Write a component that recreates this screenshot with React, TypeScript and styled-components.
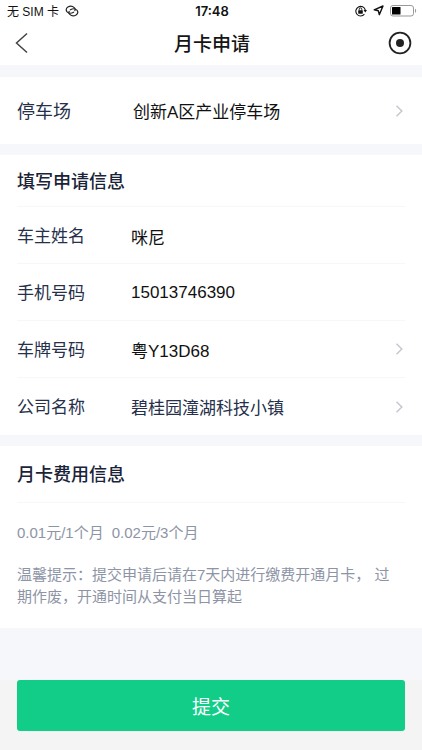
import React from "react";
import styled, { createGlobalStyle } from "styled-components";

const GlobalStyle = createGlobalStyle`
  * { box-sizing: border-box; }
  html, body, #root { height: 100%; }
  body {
    margin: 0;
    background: #f4f4f4;
    color: #1a2338;
    font-family: "Liberation Sans", "Noto Sans CJK SC", sans-serif;
  }
  button, input { font: inherit; }
`;

const Screen = styled.div`
  display: flex;
  flex-direction: column;
  min-height: 100%;
`;

const StatusBar = styled.div`
  display: grid;
  grid-template-columns: 1fr auto 1fr;
  align-items: center;
  height: 21px;
  padding: 0 5px 0 7px;
  background: #fff;
  color: #111;
  font-size: 12px;
`;

const StatusGroup = styled.div<{ $end?: boolean }>`
  display: flex;
  align-items: center;
  justify-content: ${(p) => (p.$end ? "flex-end" : "flex-start")};
  gap: 6px;
`;

const Clock = styled.time`
  font: 600 13px "Inter", sans-serif;
`;

const NavBar = styled.header`
  display: grid;
  grid-template-columns: 1fr auto 1fr;
  align-items: center;
  height: 44px;
  padding: 0 10px 0 12px;
  background: #fff;
`;

const NavTitle = styled.h1`
  margin: 0;
  padding-bottom: 2px;
  color: #151515;
  font-size: 19px;
  font-weight: 500;
`;

const IconButton = styled.button<{ $end?: boolean }>`
  display: flex;
  justify-self: ${(p) => (p.$end ? "end" : "start")};
  padding: 0;
  border: 0;
  background: none;
  cursor: pointer;
`;

const Content = styled.main`
  display: flex;
  flex-direction: column;
  gap: 11px;
  padding: 12px 0 52px;
  background: #f5f7fa;
`;

const Card = styled.section`
  padding: 0 17px;
  background: #fff;
`;

const CardTitle = styled.h2<{ $tall?: boolean }>`
  display: flex;
  align-items: center;
  height: ${(p) => (p.$tall ? 57 : 52)}px;
  margin: 0;
  padding-bottom: 2px;
  border-bottom: 1px solid #f7f7f8;
  color: #1a2338;
  font-size: 18px;
  font-weight: 500;
`;

const Row = styled.div<{ $tall?: boolean }>`
  display: grid;
  grid-template-columns: ${(p) => (p.$tall ? 116 : 114)}px 1fr;
  align-items: center;
  height: ${(p) => (p.$tall ? 67 : 57)}px;
  border-bottom: 1px solid #f7f7f8;
  &:last-child { border-bottom: 0; }
`;

const Label = styled.label<{ $large?: boolean }>`
  padding-bottom: 2px;
  color: #26304a;
  font-size: ${(p) => (p.$large ? 18 : 17)}px;
`;

const TextInput = styled.input`
  width: 100%;
  height: 28px;
  padding: 2px 0 0;
  border: 0;
  outline: 0;
  background: none;
  color: #111;
  font-size: 17px;
`;

const Picker = styled.button<{ $muted?: boolean }>`
  display: flex;
  align-items: center;
  justify-content: space-between;
  padding: 0;
  border: 0;
  background: none;
  color: ${(p) => (p.$muted ? "#26304a" : "#111")};
  font-size: 17px;
  text-align: left;
  cursor: pointer;
`;

const Fees = styled.p`
  display: flex;
  gap: 8px;
  margin: 0;
  padding-top: 19px;
  color: #8d94a5;
  font-size: 15px;
  line-height: 22px;
`;

const Tip = styled.p`
  margin: 0;
  padding: 20px 8px 20px 0;
  color: #8d94a5;
  font-size: 15px;
  line-height: 22px;
`;

const Footer = styled.footer`
  padding: 0 17px 19px;
`;

const Submit = styled.button`
  display: block;
  width: 100%;
  height: 51px;
  border: 0;
  border-radius: 3px;
  background: #11cd88;
  color: #fff;
  font-size: 19px;
  cursor: pointer;
`;

const Chevron = () => (
  <svg width="12" height="14" viewBox="0 0 12 14" fill="none" stroke="#c5c8d0" strokeWidth="1.5" aria-hidden="true">
    <path d="M3.5 1.8 8.8 7l-5.3 5.2" />
  </svg>
);

const LinkIcon = () => (
  <svg width="14" height="12" viewBox="0 0 14 12" fill="none" stroke="#222" strokeWidth="1.2" strokeLinecap="round" aria-hidden="true">
    <path d="M8.6 7.2C6.4 8.5 3.7 8.4 2.1 6.9.7 5.5 1 3.2 2.9 2.1c2-1.2 4.8-.9 6.3.5 1 .9 1.2 2 .7 3" />
    <path d="M5.4 4.8c2.2-1.3 4.9-1.2 6.5.3 1.4 1.4 1.1 3.700-.8 4.8-2 1.2-4.8.9-6.300-.5-1-.9-1.200-2-.7-3" />
  </svg>
);

const RotationLockIcon = () => (
  <svg width="12" height="12" viewBox="0 0 12 12" fill="none" stroke="#111" aria-hidden="true">
    <path d="M9.4 9.200A4.800 4.800 0 1 1 10.300 5" strokeWidth="1.100" />
    <path d="M8.500 5h3.500l-1.700 2.400z" fill="#111" stroke="none" />
    <rect x="3.200" y="5.300" width="4.600" height="3.400" rx=".4" fill="#111" stroke="none" />
    <path d="M4.200 5.500V4.200a1.300 1.300 0 0 1 2.600 0v1.300" strokeWidth=".9" />
  </svg>
);

const LocationIcon = () => (
  <svg width="11" height="11" viewBox="0 0 11 11" fill="none" stroke="#111" strokeWidth="1.400" strokeLinejoin="round" aria-hidden="true">
    <path d="M10 1 6.300 9.700 5.300 5.700 1.200 4.800z" />
  </svg>
);

const BatteryIcon = () => (
  <svg width="27" height="12" viewBox="0 0 27 12" aria-hidden="true">
    <rect x=".5" y=".5" width="23" height="10.500" rx="2.500" fill="none" stroke="#999" />
    <rect x="2" y="2" width="8.500" height="7.500" rx=".6" fill="#000" />
    <path d="M25 3.800c1.500.4 1.500 3.500 0 3.900z" fill="#999" />
  </svg>
);

const BackIcon = () => (
  <svg width="18" height="22" viewBox="0 0 18 22" fill="none" stroke="#444" strokeWidth="1.500" aria-hidden="true">
    <path d="M15 1.500 4.500 11 15 20.500" />
  </svg>
);

const TargetIcon = () => (
  <svg width="24" height="24" viewBox="0 0 24 24" aria-hidden="true">
    <circle cx="12" cy="12" r="10.400" fill="none" stroke="#222" strokeWidth="1.800" />
    <circle cx="12" cy="12" r="4" fill="#222" />
  </svg>
);

export default function App() {
  return (
    <Screen>
      <GlobalStyle />
      <StatusBar>
        <StatusGroup>
          <span>无 SIM 卡</span>
          <LinkIcon />
        </StatusGroup>
        <Clock>17:48</Clock>
        <StatusGroup $end>
          <RotationLockIcon />
          <LocationIcon />
          <BatteryIcon />
        </StatusGroup>
      </StatusBar>
      <NavBar>
        <IconButton aria-label="返回"><BackIcon /></IconButton>
        <NavTitle>月卡申请</NavTitle>
        <IconButton $end aria-label="关闭"><TargetIcon /></IconButton>
      </NavBar>
      <Content>
        <Card>
          <Row $tall>
            <Label $large htmlFor="lot">停车场</Label>
            <Picker id="lot">创新A区产业停车场<Chevron /></Picker>
          </Row>
        </Card>
        <Card>
          <CardTitle>填写申请信息</CardTitle>
          <Row>
            <Label htmlFor="owner">车主姓名</Label>
            <TextInput id="owner" defaultValue="咪尼" />
          </Row>
          <Row>
            <Label htmlFor="phone">手机号码</Label>
            <TextInput id="phone" type="tel" defaultValue="15013746390" />
          </Row>
          <Row>
            <Label htmlFor="plate">车牌号码</Label>
            <Picker id="plate">粤Y13D68<Chevron /></Picker>
          </Row>
          <Row>
            <Label htmlFor="company">公司名称</Label>
            <Picker $muted id="company">碧桂园潼湖科技小镇<Chevron /></Picker>
          </Row>
        </Card>
        <Card>
          <CardTitle $tall>月卡费用信息</CardTitle>
          <Fees>
            <span>0.01元/1个月</span>
            <span>0.02元/3个月</span>
          </Fees>
          <Tip>温馨提示：提交申请后请在7天内进行缴费开通月卡， 过期作废，开通时间从支付当日算起</Tip>
        </Card>
      </Content>
      <Footer>
        <Submit type="submit">提交</Submit>
      </Footer>
    </Screen>
  );
}
